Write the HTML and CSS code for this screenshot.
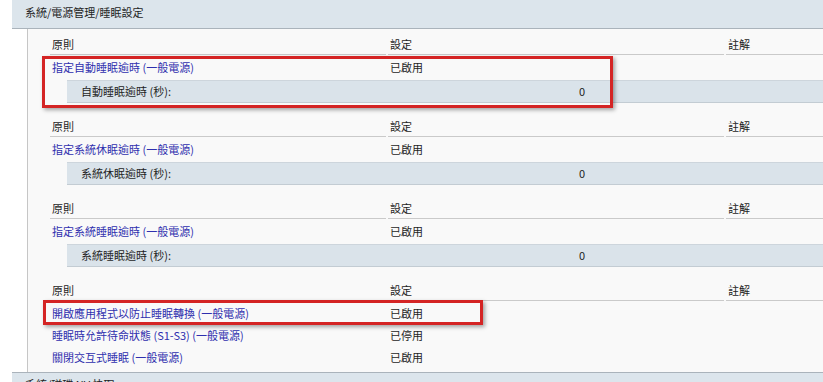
FILE: index.html
```html
<!DOCTYPE html>
<html lang="zh-Hant">
<head>
<meta charset="utf-8">
<title>睡眠設定</title>
<link rel="stylesheet" href="styles.css">
</head>
<body>
<div class="report">
  <div class="cat-head cat-first">系統/電源管理/睡眠設定</div>
  <div class="cat-body">
    <div class="policy">
      <div class="th">原則</div><div class="th">設定</div><div class="th">註解</div>
      <a class="td link" href="#">指定自動睡眠逾時 (一般電源)</a><div class="td">已啟用</div><div class="td"></div>
    </div>
    <div class="option"><span class="opt-label">自動睡眠逾時 (秒):</span><span class="opt-value">0</span></div>

    <div class="policy">
      <div class="th">原則</div><div class="th">設定</div><div class="th">註解</div>
      <a class="td link" href="#">指定系統休眠逾時 (一般電源)</a><div class="td">已啟用</div><div class="td"></div>
    </div>
    <div class="option"><span class="opt-label">系統休眠逾時 (秒):</span><span class="opt-value">0</span></div>

    <div class="policy">
      <div class="th">原則</div><div class="th">設定</div><div class="th">註解</div>
      <a class="td link" href="#">指定系統睡眠逾時 (一般電源)</a><div class="td">已啟用</div><div class="td"></div>
    </div>
    <div class="option"><span class="opt-label">系統睡眠逾時 (秒):</span><span class="opt-value">0</span></div>

    <div class="policy">
      <div class="th">原則</div><div class="th">設定</div><div class="th">註解</div>
      <a class="td link" href="#">開啟應用程式以防止睡眠轉換 (一般電源)</a><div class="td">已啟用</div><div class="td"></div>
      <a class="td link" href="#">睡眠時允許待命狀態 (S1-S3) (一般電源)</a><div class="td">已停用</div><div class="td"></div>
      <a class="td link" href="#">關閉交互式睡眠 (一般電源)</a><div class="td">已啟用</div><div class="td"></div>
    </div>
  </div>
  <div class="cat-head">系統/磁碟 NV 快取</div>
</div>
<div class="callout callout-a"></div>
<div class="callout callout-b"></div>
</body>
</html>
```
FILE: styles.css
```css
html, body {
  margin: 0;
  padding: 0;
  background: #ffffff;
}
body {
  font-family: "Noto Sans CJK TC", "Noto Sans", sans-serif;
  font-size: 11px;
  color: #1e1e1e;
  position: relative;
  overflow: hidden;
  height: 382px;
}
.report {
  padding-left: 12px;
}
.cat-head {
  background: #dce5ec;
  border-top: 1px solid #aab3bb;
  border-bottom: 1px solid #aab3bb;
  padding: 4px 13px 9px;
  line-height: 14px;
}
.cat-first {
  border-top-color: #dce5ec;
}
.cat-body {
  margin-left: 15px;
  border-left: 1px solid #c6c6c6;
  background: #f9f9f9;
  padding: 6px 0 5px 22px;
}
.policy {
  display: grid;
  grid-template-columns: 336px 336px 1fr;
  column-gap: 2px;
}
.th {
  line-height: 19px;
  padding-left: 2px;
  border-bottom: 1px solid #cacaca;
}
.td {
  padding: 3px 0 0 2px;
  line-height: 19px;
}
.link {
  color: #2f2fae;
  text-decoration: none;
}
.option {
  display: grid;
  grid-template-columns: 498px 1fr;
  margin: 3px 0 14px 17px;
  padding-left: 14px;
  background: #dae3ea;
  border-top: 1px solid #cdd5dc;
  border-bottom: 1px solid #c3ccd3;
  line-height: 21px;
}
.callout {
  position: absolute;
  border: 3px solid #d42424;
  box-shadow: 2px 2px 4px rgba(0, 0, 0, 0.35);
  box-sizing: border-box;
}
.callout-a {
  left: 42px;
  top: 56px;
  width: 571px;
  height: 52px;
}
.callout-b {
  left: 43px;
  top: 300px;
  width: 440px;
  height: 25px;
}
```
